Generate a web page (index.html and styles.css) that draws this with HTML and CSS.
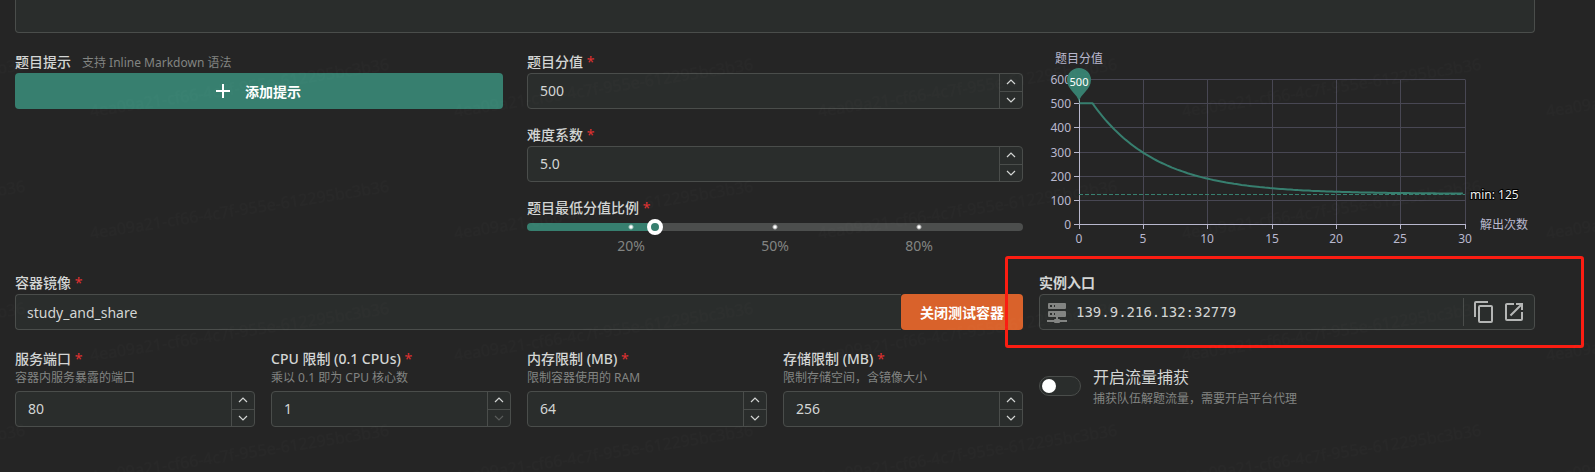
FILE: index.html
```html
<!DOCTYPE html>
<html lang="zh-CN">
<head>
<meta charset="utf-8">
<title>题目编辑</title>
<meta name="viewport" content="width=device-width, initial-scale=1">
<link rel="stylesheet" href="styles.css">
</head>
<body>
<svg class="sprite" aria-hidden="true">
  <symbol id="up" viewBox="0 0 10 6"><path d="M1 5l4-4 4 4" fill="none" stroke="currentColor" stroke-width="1.2"/></symbol>
  <symbol id="down" viewBox="0 0 10 6"><path d="M1 1l4 4 4-4" fill="none" stroke="currentColor" stroke-width="1.2"/></symbol>
</svg>
<main class="page">
  <textarea class="content-box" aria-label="题目描述"></textarea>

  <form class="form">
    <section class="hints">
      <div class="hint-label"><span class="label">题目提示</span><span class="desc">支持 Inline Markdown 语法</span></div>
      <button type="button" class="btn btn-add">
        <svg width="16" height="16" viewBox="0 0 16 16" aria-hidden="true"><path d="M8 1v14M1 8h14" stroke="currentColor" stroke-width="2"/></svg>
        添加提示
      </button>
    </section>

    <section class="scores">
      <div class="field">
        <label class="label" for="score">题目分值 <span class="req">*</span></label>
        <div class="number"><input id="score" type="text" inputmode="numeric" value="500">
          <div class="spin"><button type="button" aria-label="增加"><svg><use href="#up"/></svg></button><button type="button" aria-label="减少"><svg><use href="#down"/></svg></button></div></div>
      </div>
      <div class="field">
        <label class="label" for="difficulty">难度系数 <span class="req">*</span></label>
        <div class="number"><input id="difficulty" type="text" inputmode="decimal" value="5.0">
          <div class="spin"><button type="button" aria-label="增加"><svg><use href="#up"/></svg></button><button type="button" aria-label="减少"><svg><use href="#down"/></svg></button></div></div>
      </div>
      <div class="field">
        <label class="label" for="ratio">题目最低分值比例 <span class="req">*</span></label>
        <input class="slider" id="ratio" type="range" min="0" max="100" value="25">
        <div class="marks"><span>20%</span><span>50%</span><span>80%</span></div>
      </div>
    </section>

    <section class="chart-area">
      <svg class="chart" viewBox="0 0 496 202" role="img" aria-label="题目分值曲线">
        <g class="grid-lines">
          <path d="M40 27.500H426.500M40 51.500H426M40 75.500H426M40 100.500H426M40 124.500H426M40 148.500H426"/>
          <path d="M104.500 28V172M168.500 28V172M233.500 28V172M297.500 28V172M361.500 28V172M426.500 28V172"/>
        </g>
        <path class="axis" d="M40.500 27V177M35 172.500H427M35 27.500h5M35 51.500h5M35 75.500h5M35 100.500h5M35 124.500h5M35 148.500h5M104.500 172v5M168.500 172v5M233.500 172v5M297.500 172v5M361.500 172v5M426.500 172v5"/>
        <path class="min-line" d="M40 142.500H426"/>
        <path class="curve" id="curve" d=""/>
        <g class="tick y">
          <text x="32" y="32">600</text><text x="32" y="56">500</text><text x="32" y="80">400</text><text x="32" y="105">300</text><text x="32" y="129">200</text><text x="32" y="153">100</text><text x="32" y="177">0</text>
        </g>
        <g class="tick x">
          <text x="40" y="191">0</text><text x="104" y="191">5</text><text x="168" y="191">10</text><text x="233" y="191">15</text><text x="297" y="191">20</text><text x="361" y="191">25</text><text x="426" y="191">30</text>
          <text x="40" y="11">题目分值</text>
        </g>
        <text class="tick" x="441" y="177">解出次数</text>
        <path class="pin" d="M40 50C39 42 28 38 28 28a12 12 0 0 1 24 0C52 38 41 42 40 50Z"/>
        <text class="pin-text" x="40" y="34">500</text>
        <text class="min-text" x="431" y="147">min: 125</text>
      </svg>
    </section>

    <section class="image-field">
      <label class="label" for="image">容器镜像 <span class="req">*</span></label>
      <div class="image-row">
        <input id="image" type="text" value="study_and_share">
        <button type="button" class="btn btn-stop">关闭测试容器</button>
      </div>
    </section>

    <section class="entry">
      <label class="label strong" for="entry">实例入口</label>
      <div class="entry-row">
        <svg class="server" width="24" height="24" viewBox="0 0 24 24" aria-hidden="true"><path fill="currentColor" d="M13,19H14A1,1 0 0,1 15,20H22V22H15A1,1 0 0,1 14,23H10A1,1 0 0,1 9,22H2V20H9A1,1 0 0,1 10,19H11V17H4A1,1 0 0,1 3,16V12A1,1 0 0,1 4,11H20A1,1 0 0,1 21,12V16A1,1 0 0,1 20,17H13V19M4,3H20A1,1 0 0,1 21,4V8A1,1 0 0,1 20,9H4A1,1 0 0,1 3,8V4A1,1 0 0,1 4,3M9,7H10V5H9V7M9,15H10V13H9V15M5,5V7H7V5H5M5,13V15H7V13H5Z"/></svg>
        <input id="entry" type="text" readonly value="139.9.216.132:32779">
        <div class="entry-actions">
          <button type="button" aria-label="复制"><svg width="24" height="24" viewBox="0 0 24 24"><path fill="currentColor" d="M19,21H8V7H19M19,5H8A2,2 0 0,0 6,7V21A2,2 0 0,0 8,23H19A2,2 0 0,0 21,21V7A2,2 0 0,0 19,5M16,1H4A2,2 0 0,0 2,3V17H4V3H16V1Z"/></svg></button>
          <button type="button" aria-label="打开"><svg width="24" height="24" viewBox="0 0 24 24"><path fill="currentColor" d="M14,3V5H17.59L7.760,14.830L9.170,16.240L19,6.410V10H21V3M19,19H5V5H12V3H5C3.890,3 3,3.900 3,5V19A2,2 0 0,0 5,21H19A2,2 0 0,0 21,19V12H19V19Z"/></svg></button>
        </div>
      </div>
      <div class="highlight" aria-hidden="true"></div>
    </section>

    <section class="field cell">
      <label class="label" for="port">服务端口 <span class="req">*</span></label>
      <p class="desc">容器内服务暴露的端口</p>
      <div class="number"><input id="port" type="text" inputmode="numeric" value="80">
        <div class="spin"><button type="button" aria-label="增加"><svg><use href="#up"/></svg></button><button type="button" aria-label="减少"><svg><use href="#down"/></svg></button></div></div>
    </section>
    <section class="field cell">
      <label class="label" for="cpu">CPU 限制 (0.1 CPUs) <span class="req">*</span></label>
      <p class="desc">乘以 0.1 即为 CPU 核心数</p>
      <div class="number"><input id="cpu" type="text" inputmode="numeric" value="1">
        <div class="spin"><button type="button" aria-label="增加"><svg><use href="#up"/></svg></button><button type="button" aria-label="减少" disabled><svg><use href="#down"/></svg></button></div></div>
    </section>
    <section class="field cell">
      <label class="label" for="memory">内存限制 (MB) <span class="req">*</span></label>
      <p class="desc">限制容器使用的 RAM</p>
      <div class="number"><input id="memory" type="text" inputmode="numeric" value="64">
        <div class="spin"><button type="button" aria-label="增加"><svg><use href="#up"/></svg></button><button type="button" aria-label="减少"><svg><use href="#down"/></svg></button></div></div>
    </section>
    <section class="field cell">
      <label class="label" for="storage">存储限制 (MB) <span class="req">*</span></label>
      <p class="desc">限制存储空间，含镜像大小</p>
      <div class="number"><input id="storage" type="text" inputmode="numeric" value="256">
        <div class="spin"><button type="button" aria-label="增加"><svg><use href="#up"/></svg></button><button type="button" aria-label="减少"><svg><use href="#down"/></svg></button></div></div>
    </section>
    <section class="capture">
      <input class="switch" id="capture" type="checkbox" role="switch">
      <label for="capture"><span class="capture-title">开启流量捕获</span><span class="desc">捕获队伍解题流量，需要开启平台代理</span></label>
    </section>
  </form>
</main>
<svg class="watermark" aria-hidden="true">
  <defs><pattern id="wm" x="89" y="53" width="364" height="122" patternUnits="userSpaceOnUse"><text x="0" y="0" transform="translate(2 64) rotate(-9)">4ea09a21-cf66-4c7f-955e-612295bc3b36</text></pattern></defs>
  <rect width="100%" height="100%" fill="url(#wm)"/>
</svg>
<script src="chart.js"></script>
</body>
</html>
```
FILE: chart.js
```js
// Score decay: full score up to one solve, then exponential towards the minimum.
const score = 500, ratio = 0.25, difficulty = 5;
const points = [];
for (let n = 0; n <= 29.8; n += 0.2) {
  const v = n <= 1 ? score : score * (ratio + (1 - ratio) * Math.exp((1 - n) / difficulty));
  points.push((40.5 + n * 386 / 30).toFixed(1) + ' ' + (172 - v * 145 / 600).toFixed(1));
}
document.getElementById('curve').setAttribute('d', 'M' + points.join('L'));
```
FILE: styles.css
```css
* { box-sizing: border-box; }

body {
  margin: 0;
  background: #252525;
  color: #d3d5d4;
  font: 500 14px/21px "Noto Sans", "Noto Sans CJK SC", sans-serif;
}

button, input, textarea { font: inherit; color: inherit; }
input { font-weight: 400; }
button { cursor: pointer; }
p { margin: 0; }
.sprite { display: none; }

.page { padding: 0 60px 0 15px; }

.content-box {
  display: block;
  width: 100%;
  height: 33px;
  resize: none;
  background: #2a2d2c;
  border: 1px solid #4a4d4b;
  border-top: 0;
  border-radius: 0 0 4px 4px;
}

.form {
  display: grid;
  grid-template-columns: repeat(6, minmax(0, 1fr));
  gap: 19px 16px;
  padding-top: 19px;
}

.hints { grid-column: span 2; padding-right: 8px; }
.scores { grid-column: span 2; display: grid; gap: 16px; align-content: start; }
.chart-area { grid-column: span 2; }
.image-field { grid-column: span 4; }
.entry { grid-column: span 2; position: relative; }

.label { display: block; padding-bottom: 2px; line-height: 19px; }
.strong { font-weight: 700; }
.req { color: #e03131; font-weight: 400; }
.desc { display: block; font-size: 12px; font-weight: 400; line-height: 16px; color: #828482; }
.hint-label { display: flex; align-items: center; gap: 11px; }

.btn {
  display: flex;
  align-items: center;
  justify-content: center;
  height: 36px;
  border: 0;
  border-radius: 4px;
  color: #fff;
  font-weight: 700;
}
.btn-add { width: 100%; gap: 14px; padding: 0 8px 0 6px; background: #377f6f; }
.btn-stop { padding: 0 19px; background: #d9622b; white-space: nowrap; }

.number {
  display: flex;
  height: 36px;
  background: #2a2d2c;
  border: 1px solid #4a4d4b;
  border-radius: 4px;
}
.number input { flex: 1; min-width: 0; padding: 0 12px 2px; background: none; border: 0; outline: 0; }
.spin { display: flex; flex-direction: column; width: 23px; border-left: 1px solid #4a4d4b; }
.spin button {
  flex: 1;
  display: flex;
  align-items: center;
  justify-content: center;
  padding: 0;
  background: none;
  border: 0;
}
.spin button + button { border-top: 1px solid #4a4d4b; }
.spin button:disabled { color: #5a5c5b; }
.spin svg { width: 10px; height: 6px; }
.cell .number { margin-top: 5px; }

.slider {
  --track: linear-gradient(to right, #377f6f 25%, #4c4e4d 25%);
  appearance: none;
  display: block;
  width: 100%;
  height: 8px;
  margin: 4px 0 0;
  border-radius: 4px;
  background:
    radial-gradient(circle at calc(8px + (100% - 16px) * 0.2) 50%, #fff 1px, transparent 3px),
    radial-gradient(circle at 50% 50%, #fff 1px, transparent 3px),
    radial-gradient(circle at calc(8px + (100% - 16px) * 0.8) 50%, #fff 1px, transparent 3px),
    var(--track);
}
.slider::-webkit-slider-thumb {
  appearance: none;
  width: 16px;
  height: 16px;
  border: 4px solid #fff;
  border-radius: 50%;
  background: #377f6f;
}
.marks {
  display: grid;
  grid-template-columns: repeat(3, 30%);
  justify-content: center;
  margin: 7px 8px 0;
  line-height: 16px;
  text-align: center;
  font-weight: 400;
  color: #828482;
}

.chart { display: block; width: 100%; height: auto; overflow: visible; font-size: 12px; font-weight: 400; }
.grid-lines { fill: none; stroke: #484753; }
.axis { fill: none; stroke: #b9b8ce; }
.curve { fill: none; stroke: #377f6f; stroke-width: 2; stroke-linejoin: round; }
.min-line { fill: none; stroke: #377f6f; stroke-dasharray: 4 2; }
.tick { fill: #b9b8ce; }
.y { text-anchor: end; }
.x { text-anchor: middle; }
.pin { fill: #377f6f; }
.pin-text { fill: #fff; font-size: 11px; font-weight: 400; text-anchor: middle; }
.min-text { fill: #eee; stroke: #000; stroke-width: 2px; paint-order: stroke; }

.image-row { display: flex; }
.image-row input {
  flex: 1;
  min-width: 0;
  height: 36px;
  padding: 0 11px;
  background: #2a2d2c;
  border: 1px solid #4a4d4b;
  border-right: 0;
  border-radius: 4px 0 0 4px;
}

.entry-row {
  display: flex;
  align-items: center;
  height: 36px;
  padding: 0 8px 0 5px;
  background: #2a2d2c;
  border: 1px solid #4a4d4b;
  border-radius: 4px;
}
.server { flex: none; color: #828482; }
.entry-row input {
  flex: 1;
  min-width: 0;
  padding: 0 7px;
  background: none;
  border: 0;
  outline: 0;
  font-family: "DejaVu Sans Mono", monospace;
}
.entry-actions {
  display: flex;
  align-items: center;
  gap: 6px;
  height: 28px;
  padding-left: 8px;
  border-left: 1px solid #4a4d4b;
}
.entry-actions button { display: flex; padding: 0; background: none; border: 0; color: #b4b6b5; }
.highlight {
  position: absolute;
  inset: -17px -49px -18px -34px;
  border: 3px solid #fb1d12;
  border-radius: 3px;
  pointer-events: none;
}

.capture { grid-column: span 2; display: flex; gap: 12px; padding-top: 16px; }
.capture-title { display: block; margin-bottom: 2px; font-size: 16px; line-height: 24px; font-weight: 400; }
.switch {
  appearance: none;
  flex: none;
  display: flex;
  align-items: center;
  width: 42px;
  height: 20px;
  margin: 11px 0 0;
  padding: 0 2px;
  background: #2a2d2c;
  border: 1px solid #4a4d4b;
  border-radius: 10px;
}
.switch::before { content: ""; width: 14px; height: 14px; border-radius: 50%; background: #fff; }
.switch:checked { justify-content: flex-end; background: #377f6f; }

.watermark { position: absolute; inset: 0; width: 100%; height: 100%; pointer-events: none; }
.watermark text { font-size: 16px; font-weight: 400; fill: #fff; fill-opacity: 0.01; }
```
